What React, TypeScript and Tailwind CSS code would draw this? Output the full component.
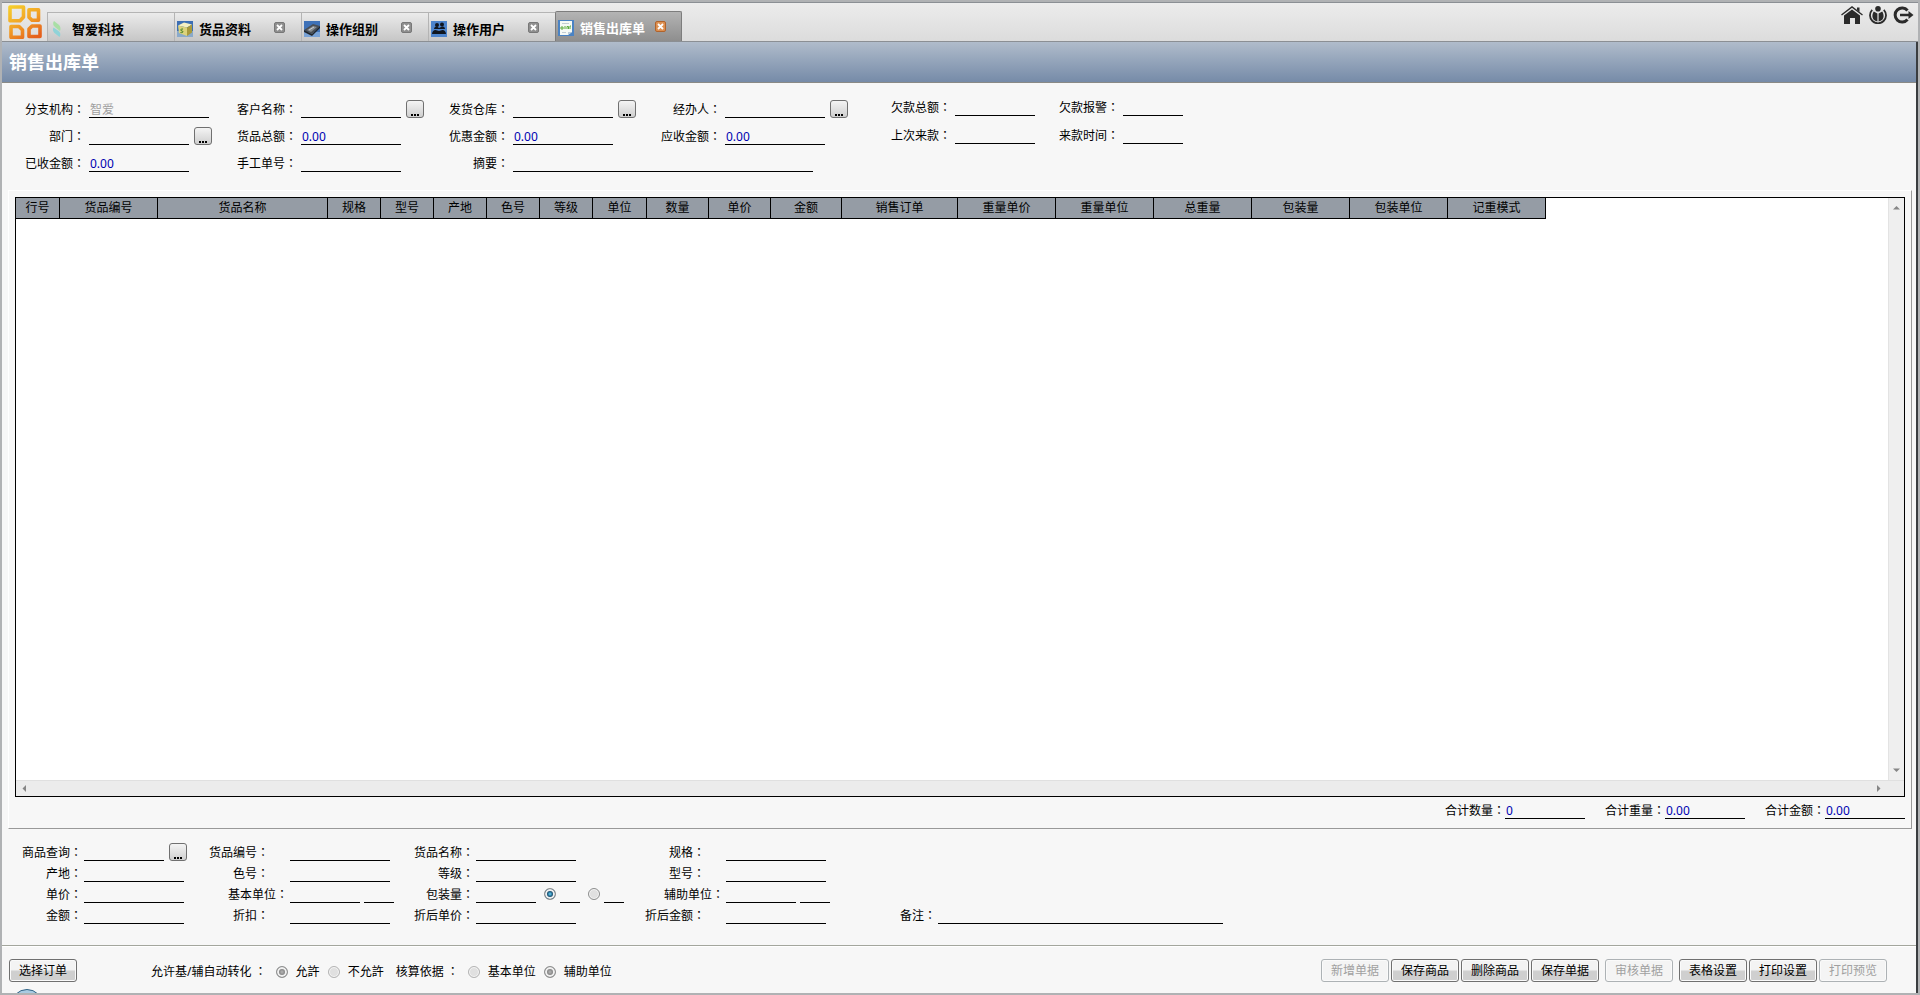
import type { ReactNode } from 'react'

type TabItem = { title: string; icon: ReactNode; active?: boolean; closable?: boolean }

const COLUMNS: { title: string; width: string }[] = [
  { title: '行号', width: 'w-[44px]' },
  { title: '货品编号', width: 'w-[98px]' },
  { title: '货品名称', width: 'w-[170px]' },
  { title: '规格', width: 'w-[53px]' },
  { title: '型号', width: 'w-[53px]' },
  { title: '产地', width: 'w-[53px]' },
  { title: '色号', width: 'w-[53px]' },
  { title: '等级', width: 'w-[53px]' },
  { title: '单位', width: 'w-[54px]' },
  { title: '数量', width: 'w-[62px]' },
  { title: '单价', width: 'w-[62px]' },
  { title: '金额', width: 'w-[71px]' },
  { title: '销售订单', width: 'w-[116px]' },
  { title: '重量单价', width: 'w-[98px]' },
  { title: '重量单位', width: 'w-[98px]' },
  { title: '总重量', width: 'w-[98px]' },
  { title: '包装量', width: 'w-[98px]' },
  { title: '包装单位', width: 'w-[98px]' },
  { title: '记重模式', width: 'w-[98px]' },
]

function Logo() {
  return (
    <svg viewBox="0 0 34 34" className="h-[34px] w-[34px]" fill="none" aria-hidden="true">
      <defs>
        <linearGradient id="logo" gradientUnits="userSpaceOnUse" x1="4" y1="0" x2="24" y2="34">
          <stop offset="0" stopColor="#f5cf2c" />
          <stop offset="0.5" stopColor="#f2a326" />
          <stop offset="1" stopColor="#e5601c" />
        </linearGradient>
      </defs>
      <g stroke="url(#logo)" strokeWidth="3.6" strokeLinejoin="round">
        <path d="M2 2h13.500v10l-3.500 3.800H2z" />
        <path d="M21 4.800h9.500v10.500h-6.500l-3-3z" />
        <path d="M3 21.500h8l3.500 3.500v7.300H3z" />
        <path d="M24 21h8v10.500H21v-7.500z" />
      </g>
    </svg>
  )
}

function LeafIcon() {
  return (
    <svg viewBox="0 0 16 16" className="h-4 w-4" aria-hidden="true">
      <path d="M4 0C2.500 2 3 4.500 5 6l5 4c1-2 .5-4.500-1-6z" fill="#a9dfa5" />
      <path d="M9.500 16c1.500-2 1-4.500-1-6L3.500 6.500c-1 2-.5 4 1 5.500z" fill="#8fd3d8" />
    </svg>
  )
}

function GoodsIcon() {
  return (
    <svg viewBox="0 0 16 16" className="h-4 w-4" aria-hidden="true">
      <rect width="16" height="16" fill="#3d6fb4" />
      <path d="M0 10h16v6H0z" fill="#8aaacb" />
      <path d="M1 4.500l6-3 8 2-5 3z" fill="#f5f0c4" />
      <path d="M1 4.500l9 2V15l-8-3z" fill="#dcd37c" />
      <path d="M10 6.500l5-3v8L10 15z" fill="#a99a3c" />
      <path d="M6 8c-3 0-3 1.500-1 2s1 2-1.500 1.500" stroke="#3f7f25" fill="none" />
    </svg>
  )
}

function GroupIcon() {
  return (
    <svg viewBox="0 0 16 16" className="h-4 w-4" aria-hidden="true">
      <rect width="16" height="16" fill="#3f72b8" />
      <path d="M0 11h16v5H0z" fill="#78a2d6" />
      <path d="M0 9l9-6 7 2-8 8z" fill="#4a4f55" />
      <path d="M3 9l6-4 4 1-6 5z" fill="#868c92" />
      <path d="M0 9l8 4 8-8v2l-8 8-8-4z" fill="#22262b" />
      <path d="M5 9l5-3" stroke="#c9cdd1" />
    </svg>
  )
}

function UserIcon() {
  return (
    <svg viewBox="0 0 16 16" className="h-4 w-4" aria-hidden="true">
      <rect width="16" height="16" fill="#4d84cc" />
      <g fill="#10161f">
        <circle cx="6" cy="4" r="2" />
        <circle cx="11" cy="3.500" r="2" />
        <path d="M3 8c0-2 2-2.500 3-2.500L8 7l3-1.500c1.500 0 3 .5 3 2.500H3z" />
        <path d="M1 13c0-2 1.500-4 3.500-4L8 10l3.500-1c2 0 3.500 2 3.500 4z" />
      </g>
    </svg>
  )
}

function OrderIcon() {
  return (
    <svg viewBox="0 0 16 16" className="h-4 w-4" aria-hidden="true">
      <rect width="16" height="16" fill="#4a83c4" />
      <path d="M2 1h12v11l-4 3H2z" fill="#f7faf5" />
      <path d="M14 12h-4v3z" fill="#b9cbd9" />
      <path d="M4 3.500h7M4 12.500h4" stroke="#c3cdd3" />
      <path d="M3 9V7h2v2H3m4 0V6m2 3V6.500h1.500V9M12 9V6h1" stroke="#5cab3c" fill="none" />
    </svg>
  )
}

const TABS: TabItem[] = [
  { title: '智爱科技', icon: <LeafIcon /> },
  { title: '货品资料', icon: <GoodsIcon />, closable: true },
  { title: '操作组别', icon: <GroupIcon />, closable: true },
  { title: '操作用户', icon: <UserIcon />, closable: true },
  { title: '销售出库单', icon: <OrderIcon />, active: true, closable: true },
]

function Tab({ title, icon, active, closable }: TabItem) {
  return (
    <div
      className={
        active
          ? 'flex h-[30px] w-[127px] items-center rounded-t-xs border border-b-0 border-[#7d7d7d] bg-linear-to-b from-[#b4b4b4] to-[#8e8e8e] pt-[2px] pl-[2px] text-white'
          : 'flex h-[29px] w-[127px] items-center border-t border-l border-[#b4b4b4] bg-linear-to-b from-[#ebebeb] to-[#c6c6c6] pt-1 pl-[2px] text-black'
      }
    >
      {icon}
      <button className="ml-[6px] text-[13px] leading-4 font-bold">{title}</button>
      {closable && (
        <button
          aria-label={`关闭${title}`}
          className={
            active
              ? 'mr-[15px] mb-[3px] ml-auto flex h-[11px] w-[11px] items-center justify-center rounded-[2px] border border-[#b0632c] bg-[#dd9051]'
              : 'mr-4 mb-[3px] ml-auto flex h-[11px] w-[11px] items-center justify-center rounded-[2px] border border-[#777] bg-[#8f8f8f]'
          }
        >
          <svg viewBox="0 0 7 7" className="h-[7px] w-[7px]" stroke="#fff" strokeWidth="1.800" aria-hidden="true">
            <path d="M1 1l5 5M6 1L1 6" />
          </svg>
        </button>
      )}
    </div>
  )
}

function HomeIcon() {
  return (
    <svg viewBox="0 0 22 18" className="h-[18px] w-[22px]" aria-hidden="true">
      <path d="M0.500 9L11 1l10.500 8" fill="none" stroke="#2b2b2b" strokeWidth="1.400" />
      <path d="M16 1.500h2.500V6L16 4z" fill="#2b2b2b" />
      <path d="M3 9.500l8-6 8 6V18h-5v-6h-5v6H3z" fill="#2b2b2b" />
    </svg>
  )
}

function PowerIcon() {
  return (
    <svg viewBox="0 0 18 18" className="h-[18px] w-[18px]" aria-hidden="true">
      <circle cx="9" cy="2.800" r="2.800" fill="#2b2b2b" />
      <path d="M3.200 3.800a8 8 0 1 0 11.600 0" fill="none" stroke="#2b2b2b" strokeWidth="1.800" />
      <path d="M4.800 5.500L8.400 7.500v8c-3.200-.3-5-2.700-5-5.200 0-1.800.5-3.500 1.400-4.800zM13.200 5.500L9.600 7.500v8c3.200-.3 5-2.700 5-5.200 0-1.800-.5-3.500-1.400-4.800z" fill="#2b2b2b" />
    </svg>
  )
}

function ExitIcon() {
  return (
    <svg viewBox="0 0 21 18" className="h-[18px] w-[21px]" fill="none" aria-hidden="true">
      <path d="M14.500 4.500A7 7 0 1 0 14.500 13.500" stroke="#2b2b2b" strokeWidth="3" />
      <path d="M7 9h9" stroke="#2b2b2b" strokeWidth="2.500" />
      <path d="M15.500 5L20.500 9l-5 4z" fill="#2b2b2b" />
    </svg>
  )
}

// full-width colon sits in the middle of its cell only in the TC face
function Colon() {
  return <span className="font-['Noto_Sans_CJK_TC',sans-serif]">：</span>
}

type LineInputProps = { id?: string; label?: string; width: string; value?: string; disabled?: boolean }

function LineInput({ id, label, width, value, disabled }: LineInputProps) {
  return (
    <input
      id={id}
      aria-label={label}
      defaultValue={value}
      disabled={disabled}
      className={`h-[18px] shrink-0 border-b border-black bg-transparent px-px pt-px text-xs leading-4 text-[#0000b0] outline-none disabled:text-[#a0a0a0] ${width}`}
    />
  )
}

function PickButton({ label }: { label: string }) {
  return (
    <button
      aria-label={label}
      className="ml-[5px] flex h-[18px] w-[18px] shrink-0 items-end justify-center rounded-[3px] border border-[#707070] bg-linear-to-b from-[#f4f4f4] to-[#cfcfcf] pb-px"
    >
      <svg viewBox="0 0 8 2" className="h-[2px] w-[8px]" fill="#000" aria-hidden="true">
        <path d="M0 0h2v2H0zM3 0h2v2H3zM6 0h2v2H6z" />
      </svg>
    </button>
  )
}

type FieldProps = LineInputProps & { id: string; label: string; labelWidth: string; pick?: boolean; children?: ReactNode }

function Field({ id, label, labelWidth, width, value, disabled, pick, children }: FieldProps) {
  return (
    <div className="flex items-end">
      <label htmlFor={id} className={`shrink-0 text-right leading-4 whitespace-nowrap ${labelWidth}`}>
        {label}
        <Colon />
      </label>
      <LineInput id={id} width={width} value={value} disabled={disabled} />
      {pick && <PickButton label={`选择${label}`} />}
      {children}
    </div>
  )
}

type RadioProps = { id?: string; name: string; label?: string; checked?: boolean; disabled?: boolean }

function Radio({ id, name, label, checked, disabled }: RadioProps) {
  return (
    <input
      id={id}
      type="radio"
      name={name}
      aria-label={label}
      defaultChecked={checked}
      disabled={disabled}
      className="h-3 w-3 shrink-0 appearance-none rounded-full border border-[#8e8f8f] bg-[#e0e0e0] shadow-[inset_0_0_0_1px_#f6f6f6] checked:bg-radial checked:from-[#5cc3ea] checked:from-5% checked:to-[#134a6b] checked:to-40% checked:shadow-[inset_0_0_0_2px_#f0f0f0] disabled:border-[#b4b4b4] disabled:checked:border-[#8e8f8f] disabled:checked:from-[#b0b0b0] disabled:checked:to-[#858585]"
    />
  )
}

function ToolButton({ children, disabled }: { children: ReactNode; disabled?: boolean }) {
  return (
    <button
      disabled={disabled}
      className="h-[23px] w-[68px] rounded-[3px] border border-[#707070] bg-linear-to-b from-[#f3f3f3] from-45% to-[#cfcfcf] to-55% text-center leading-4 text-black shadow-[inset_0_0_0_1px_#fafafa] disabled:border-[#adb2b5] disabled:bg-[#f4f4f4] disabled:bg-none disabled:text-[#a0a0a0]"
    >
      {children}
    </button>
  )
}

function Arrow({ d }: { d: string }) {
  return (
    <svg viewBox="0 0 7 7" className="h-[7px] w-[7px]" fill="#868686" aria-hidden="true">
      <path d={d} />
    </svg>
  )
}

function Header() {
  return (
    <header className="flex h-[40px] items-end border-t border-b border-[#8b8f94] bg-linear-to-b from-[#ececec] to-[#dcdcdc] pl-[6px]">
      <div className="mr-[5px] mb-[2px]">
        <Logo />
      </div>
      <nav className="flex items-end">
        {TABS.map((tab) => (
          <Tab key={tab.title} {...tab} />
        ))}
      </nav>
      <div className="ml-auto flex items-center gap-[6px] self-start pt-[3px] pr-1">
        <button aria-label="首页">
          <HomeIcon />
        </button>
        <button aria-label="用户">
          <PowerIcon />
        </button>
        <button aria-label="退出">
          <ExitIcon />
        </button>
      </div>
    </header>
  )
}

function OrderForm() {
  return (
    <section className="flex h-[107px] items-start pt-[17px] pl-[23px]">
      <div className="grid grid-cols-[212px_212px_212px_230px] gap-y-[9px]">
        <Field id="branch" label="分支机构" labelWidth="w-[60px] mr-1" width="w-[120px]" value="智爱" disabled />
        <Field id="customer" label="客户名称" labelWidth="w-[60px] mr-1" width="w-[100px]" pick />
        <Field id="warehouse" label="发货仓库" labelWidth="w-[60px] mr-1" width="w-[100px]" pick />
        <Field id="handler" label="经办人" labelWidth="w-[60px] mr-1" width="w-[100px]" pick />
        <Field id="dept" label="部门" labelWidth="w-[60px] mr-1" width="w-[100px]" pick />
        <Field id="total" label="货品总额" labelWidth="w-[60px] mr-1" width="w-[100px]" value="0.00" />
        <Field id="discount" label="优惠金额" labelWidth="w-[60px] mr-1" width="w-[100px]" value="0.00" />
        <Field id="receivable" label="应收金额" labelWidth="w-[60px] mr-1" width="w-[100px]" value="0.00" />
        <Field id="received" label="已收金额" labelWidth="w-[60px] mr-1" width="w-[100px]" value="0.00" />
        <Field id="manual-no" label="手工单号" labelWidth="w-[60px] mr-1" width="w-[100px]" />
        <div className="col-span-2">
          <Field id="summary" label="摘要" labelWidth="w-[60px] mr-1" width="w-[300px]" />
        </div>
      </div>
      <div className="-mt-[2px] grid grid-cols-[168px_124px] gap-y-[10px]">
        <Field id="debt" label="欠款总额" labelWidth="w-[60px] mr-1" width="w-[80px]" />
        <Field id="debt-alert" label="欠款报警" labelWidth="w-[60px] mr-1" width="w-[60px]" />
        <Field id="last-pay" label="上次来款" labelWidth="w-[60px] mr-1" width="w-[80px]" />
        <Field id="pay-time" label="来款时间" labelWidth="w-[60px] mr-1" width="w-[60px]" />
      </div>
    </section>
  )
}

function ItemGrid() {
  return (
    <section className="mr-1 ml-[6px] flex flex-1 flex-col border border-t-white border-r-[#999] border-b-[#999] border-l-white px-[6px] pt-[6px] pb-[9px]">
      <div className="flex flex-1 flex-col border border-black bg-white">
        <div className="flex flex-1">
          <div className="flex-1">
            <table className="-mt-px -ml-px table-fixed border-collapse">
              <thead>
                <tr className="h-[21px] bg-[#959ca5]">
                  {COLUMNS.map((col) => (
                    <th key={col.title} className={`border border-black p-0 text-center leading-4 font-normal ${col.width}`}>
                      {col.title}
                    </th>
                  ))}
                </tr>
              </thead>
            </table>
          </div>
          <div className="flex w-4 flex-col items-center justify-between border-l border-[#e3e3e3] bg-[#efefef] py-[6px]">
            <Arrow d="M0 5.500L3.500 2 7 5.500z" />
            <Arrow d="M0 1.500L3.500 5 7 1.500z" />
          </div>
        </div>
        <div className="flex h-4 items-center justify-between border-t border-[#e0e0e0] bg-[#ececec] pr-[22px] pl-[5px]">
          <Arrow d="M5 0v7L1.500 3.500z" />
          <Arrow d="M2 0v7l3.500-3.500z" />
        </div>
      </div>
      <div className="mt-1 flex justify-end gap-5">
        <Field id="sum-qty" label="合计数量" labelWidth="w-[60px]" width="w-[80px]" value="0" />
        <Field id="sum-weight" label="合计重量" labelWidth="w-[60px]" width="w-[80px]" value="0.00" />
        <Field id="sum-amount" label="合计金额" labelWidth="w-[60px]" width="w-[80px]" value="0.00" />
      </div>
    </section>
  )
}

function ItemForm() {
  return (
    <section className="flex h-[116px] items-start pt-[14px] pl-5">
      <div className="grid w-[186px] gap-y-[3px]">
        <Field id="item-query" label="商品查询" labelWidth="w-[60px] mr-[2px]" width="w-[80px]" pick />
        <Field id="item-origin" label="产地" labelWidth="w-[60px] mr-[2px]" width="w-[100px]" />
        <Field id="item-price" label="单价" labelWidth="w-[60px] mr-[2px]" width="w-[100px]" />
        <Field id="item-amount" label="金额" labelWidth="w-[60px] mr-[2px]" width="w-[100px]" />
      </div>
      <div className="grid w-[206px] gap-y-[3px]">
        <Field id="item-no" label="货品编号" labelWidth="w-[61px] mr-[21px]" width="w-[100px]" />
        <Field id="item-color" label="色号" labelWidth="w-[61px] mr-[21px]" width="w-[100px]" />
        <Field id="item-unit" label="基本单位" labelWidth="w-[80px] mr-[2px]" width="w-[70px]">
          <span className="ml-1 flex">
            <LineInput label="基本单位换算" width="w-[30px]" />
          </span>
        </Field>
        <Field id="item-rebate" label="折扣" labelWidth="w-[61px] mr-[21px]" width="w-[100px]" />
      </div>
      <div className="grid w-[230px] gap-y-[3px]">
        <Field id="item-name" label="货品名称" labelWidth="w-[60px] mr-[2px]" width="w-[100px]" />
        <Field id="item-grade" label="等级" labelWidth="w-[60px] mr-[2px]" width="w-[100px]" />
        <Field id="item-pack" label="包装量" labelWidth="w-[60px] mr-[2px]" width="w-[60px]">
          <span className="ml-2 flex items-center gap-2">
            <span className="flex items-center gap-1">
              <Radio name="pack" label="包装单位一" checked />
              <LineInput label="包装单位一名称" width="w-5" />
            </span>
            <span className="flex items-center gap-1">
              <Radio name="pack" label="包装单位二" />
              <LineInput label="包装单位二名称" width="w-5" />
            </span>
          </span>
        </Field>
        <Field id="item-net-price" label="折后单价" labelWidth="w-[60px] mr-[2px]" width="w-[100px]" />
      </div>
      <div className="grid w-[252px] gap-y-[3px]">
        <Field id="item-spec" label="规格" labelWidth="w-[61px] mr-[21px]" width="w-[100px]" />
        <Field id="item-model" label="型号" labelWidth="w-[61px] mr-[21px]" width="w-[100px]" />
        <Field id="item-aux" label="辅助单位" labelWidth="w-[80px] mr-[2px]" width="w-[70px]">
          <span className="ml-1 flex">
            <LineInput label="辅助单位换算" width="w-[30px]" />
          </span>
        </Field>
        <Field id="item-net" label="折后金额" labelWidth="w-[61px] mr-[21px]" width="w-[100px]" />
      </div>
      <div className="pt-[63px]">
        <Field id="remark" label="备注" labelWidth="w-[40px] mr-[2px]" width="w-[285px]" />
      </div>
    </section>
  )
}

function Footer() {
  return (
    <footer className="relative flex h-[48px] items-center overflow-hidden border-t border-[#a3a69d] pt-[2px] pr-[29px] pl-[7px] shadow-[inset_0_1px_0_#fff]">
      <ToolButton>选择订单</ToolButton>
      <div className="mt-[2px] ml-[74px] flex items-center leading-4">
        <span className="mr-[9px]">
          允许基/辅自动转化 <Colon />
        </span>
        <Radio id="conv-yes" name="convert" checked disabled />
        <label htmlFor="conv-yes" className="mx-2">
          允許
        </label>
        <Radio id="conv-no" name="convert" disabled />
        <label htmlFor="conv-no" className="mx-2">
          不允許
        </label>
        <span className="mr-[9px] ml-1">
          核算依据 <Colon />
        </span>
        <Radio id="basis-main" name="basis" disabled />
        <label htmlFor="basis-main" className="mx-2">
          基本单位
        </label>
        <Radio id="basis-aux" name="basis" checked disabled />
        <label htmlFor="basis-aux" className="mx-2">
          辅助单位
        </label>
      </div>
      <div className="ml-auto flex gap-[6px]">
        <div className="flex gap-[2px]">
          <ToolButton disabled>新增单据</ToolButton>
          <ToolButton>保存商品</ToolButton>
          <ToolButton>删除商品</ToolButton>
          <ToolButton>保存单据</ToolButton>
        </div>
        <ToolButton disabled>审核单据</ToolButton>
        <div className="flex gap-[2px]">
          <ToolButton>表格设置</ToolButton>
          <ToolButton>打印设置</ToolButton>
          <ToolButton disabled>打印预览</ToolButton>
        </div>
      </div>
      {/* top edge of the floating helper ball */}
      <span className="absolute top-[43px] left-[9px] h-8 w-8 rounded-full border border-[#2f6285] bg-[#a9cbe2]" />
    </footer>
  )
}

export default function App() {
  return (
    <div className="flex min-h-screen flex-col border-2 border-[#b0b2b4] bg-[#f7f7f7] font-['Noto_Sans','Noto_Sans_CJK_SC',sans-serif] text-xs text-black">
      <Header />
      <main className="flex flex-1 flex-col border-r-2 border-[#3a3d40]">
        <h1 className="flex h-[41px] items-center border-b border-[#8a8a86] bg-linear-to-b from-[#b0bccb] to-[#768ba8] pl-[7px] text-lg leading-6 font-bold text-white">
          销售出库单
        </h1>
        <OrderForm />
        <ItemGrid />
        <ItemForm />
        <Footer />
      </main>
    </div>
  )
}
